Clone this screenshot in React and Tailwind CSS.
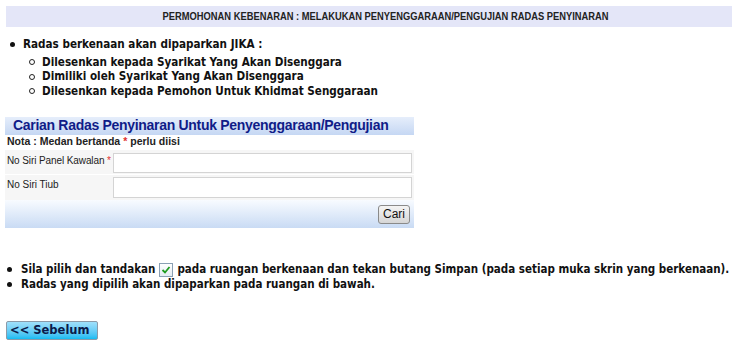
import React from "react";

const body = { fontFamily: '"DejaVu Sans Condensed", "DejaVu Sans", sans-serif' };
const arial = { fontFamily: '"Liberation Sans", Arial, sans-serif' };

function Check() {
  return (
    <span className="inline-flex items-center justify-center w-[14px] h-[14px] border border-[#8aa0b4] bg-gradient-to-b from-white to-[#e4ecf2] align-[-2px] mx-[4px]">
      <svg width="10" height="10" viewBox="0 0 10 10">
        <path d="M1.5 5 L4 7.5 L8.5 2" fill="none" stroke="#1f9b1f" strokeWidth="1.8" />
      </svg>
    </span>
  );
}

function Dot() {
  return <span className="w-[5px] h-[5px] rounded-full bg-[#111]" />;
}

export default function App() {
  return (
    <div className="w-[732px] h-[350px] bg-white overflow-hidden text-[#111]" style={arial}>
      <div className="pt-[6px] pl-[6px]">
        <div className="h-[21px] bg-[#e4e6f8] flex items-center justify-center pl-[34px]">
          <span
            className="inline-block text-[10.5px] font-bold text-[#222] whitespace-nowrap scale-x-[0.89]"
            style={arial}
          >
            PERMOHONAN KEBENARAN : MELAKUKAN PENYENGGARAAN/PENGUJIAN RADAS PENYINARAN
          </span>
        </div>
      </div>

      <div className="mt-[10px] text-[11.6px] font-bold leading-[15px]" style={body}>
        <div className="flex items-center pl-[10px]">
          <span className="w-[13px] flex"><Dot /></span>
          <span>Radas berkenaan akan dipaparkan JIKA :</span>
        </div>
        <div className="mt-[3px] pl-[29px]">
          {[
            "Dilesenkan kepada Syarikat Yang Akan Disenggara",
            "Dimiliki oleh Syarikat Yang Akan Disenggara",
            "Dilesenkan kepada Pemohon Untuk Khidmat Senggaraan",
          ].map((t) => (
            <div key={t} className="flex items-center h-[14.5px]">
              <span className="w-[6px] h-[6px] rounded-full border border-[#222] mr-[7px]" />
              <span>{t}</span>
            </div>
          ))}
        </div>
      </div>

      <div className="mt-[18px] ml-[5px] w-[409px]">
        <div className="h-[18px] bg-gradient-to-b from-[#e6eefb] to-[#c5d7f3] flex items-center pl-[8px]">
          <span className="text-[14px] font-bold text-[#101c88] tracking-[-0.3px]">
            Carian Radas Penyinaran Untuk Penyenggaraan/Pengujian
          </span>
        </div>
        <div className="h-[15px] flex items-center pl-[2px] text-[10.5px] font-bold text-[#222] whitespace-nowrap">
          Nota : Medan bertanda<span className="text-[#e03030] mx-[3px]">*</span>perlu diisi
        </div>
        <div className="h-[25px] bg-[#f6f6f6] flex items-start pt-[3px] border-b border-white">
          <div className="w-[108px] pl-[2px] text-[10px] text-[#222] whitespace-nowrap tracking-[-0.1px]">
            No Siri Panel Kawalan <span className="text-[#e03030]">*</span>
          </div>
          <div className="w-[299px] h-[20px] bg-white border border-[#d4d4d4]" />
        </div>
        <div className="h-[25px] bg-[#f6f6f6] flex items-start pt-[2px]">
          <div className="w-[108px] pl-[2px] pt-[0px] text-[10px] text-[#222] whitespace-nowrap">No Siri Tiub</div>
          <div className="w-[299px] h-[21px] bg-white border border-[#d4d4d4]" />
        </div>
        <div className="h-[28px] bg-gradient-to-b from-[#f8fbff] to-[#c9dbf4] flex justify-end items-start pt-[5px] pr-[4px]">
          <button className="w-[32px] h-[19px] rounded-[3px] border border-[#8a8a8a] bg-gradient-to-b from-[#f4f4f4] to-[#d6d6d6] text-[12px] text-[#111] leading-none">
            Cari
          </button>
        </div>
      </div>

      <div className="mt-[34px] text-[11.5px] font-bold leading-[15px] whitespace-nowrap" style={body}>
        <div className="flex items-center pl-[7px]">
          <span className="w-[14px] flex"><Dot /></span>
          <span>
            Sila pilih dan tandakan
            <Check />
            pada ruangan berkenaan dan tekan butang Simpan (pada setiap muka skrin yang berkenaan).
          </span>
        </div>
        <div className="flex items-center pl-[7px]">
          <span className="w-[14px] flex"><Dot /></span>
          <span>Radas yang dipilih akan dipaparkan pada ruangan di bawah.</span>
        </div>
      </div>

      <div className="mt-[25px] ml-[6px]">
        <button
          className="w-[92px] h-[19px] rounded-[2px] border border-[#8c9aa8] bg-gradient-to-b from-[#9fe0fb] to-[#0bbcf2] text-[11.5px] font-bold text-[#0b1a4a] text-left pl-[3px] leading-none"
          style={{ fontFamily: '"DejaVu Sans", sans-serif' }}
        >
          &lt;&lt; Sebelum
        </button>
      </div>
    </div>
  );
}
